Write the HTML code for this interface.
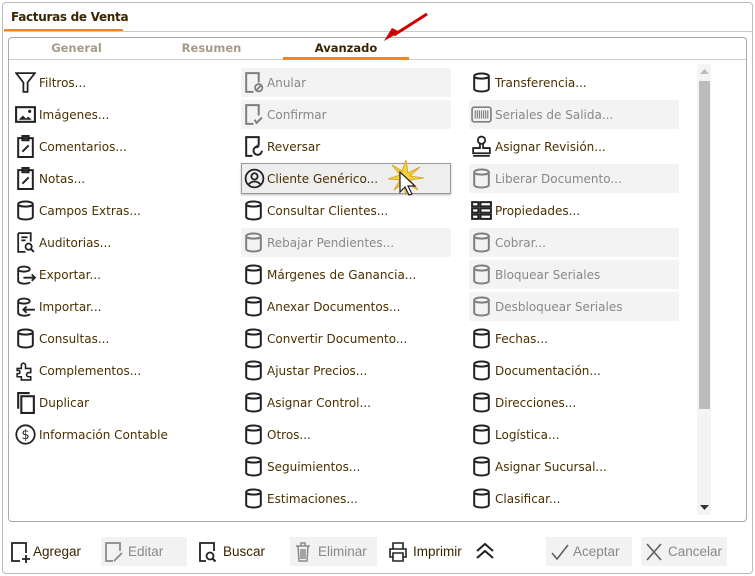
<!DOCTYPE html>
<html><head><meta charset="utf-8"><style>
*{box-sizing:border-box;margin:0;padding:0}
body{width:755px;height:576px;background:#fff;font-family:"DejaVu Sans","Liberation Sans",sans-serif;font-size:12px;color:#4a3000;position:relative;overflow:hidden}
.outer{position:absolute;left:2px;top:2px;width:751px;height:572px;border:1px solid #bbb;border-radius:4px;background:#fff}
.title{position:absolute;left:4px;top:3px;width:119px;height:29px;border-bottom:3px solid #f7841f;font-weight:bold;font-size:12px;color:#3a2500;padding:7px 0 0 7px;white-space:nowrap;letter-spacing:-0.3px}
.hline{position:absolute;left:4px;top:31px;width:748px;border-top:1px solid #ccc}
.panel{position:absolute;left:8px;top:37px;width:739px;height:485px;border:1px solid #aaa;border-radius:4px}
.tabs{position:absolute;left:9px;top:38px;width:737px;height:22px;border-bottom:1px solid #ccc}
.tab{position:absolute;top:3px;font-weight:bold;font-size:11.5px;color:#a89a88;text-align:center}
.tab.act{color:#3a2500;border-bottom:3px solid #f7841f;height:19px}
.it{position:absolute;height:29px;line-height:29px;white-space:nowrap}
.it svg{position:absolute;left:0;top:3px;width:21px;height:23px}
.it span{position:absolute;left:24px;top:1px}
.d{background:#f3f3f3;border-radius:2px;color:#888}
.d svg{opacity:.55}
.c2{left:241px;width:210px}.c2 svg{left:2px}.c2 span{left:26px}
.c3{left:469px;width:210px}.c3 svg{left:2px}.c3 span{left:26px}
.c1{left:15px;width:200px}
.hov{border:1px solid #999;background:#eee;box-shadow:0 1px 2px #bbb}
.sb{position:absolute;left:697px;top:64px;width:14px;height:451px;background:#f4f4f4}
.th{position:absolute;left:699px;top:81px;width:11px;height:328px;background:#bcbcbc}
.btn{position:absolute;top:537px;height:29px;line-height:29px;font-family:"Liberation Sans",sans-serif;font-size:13.5px;color:#3a2500}
.btn svg{position:absolute;top:4px;width:20px;height:22px}
.btn span{position:absolute}
.bd{background:#f2f2f2;color:#888}
</style></head><body>
<svg width="0" height="0" style="position:absolute"><defs>
<symbol id="db" viewBox="0 0 20 22"><path d="M3 5c0-3.5 14-3.5 14 0v12c0 3.5-14 3.5-14 0z M3 5c0 3 14 3 14 0" fill="none" stroke="#222" stroke-width="1.9"/></symbol>
</defs></svg>
<div class="outer"></div>
<div class="title">Facturas de Venta</div>
<div class="hline"></div>
<div class="panel"></div>
<div class="tabs">
<div class="tab" style="left:20px;width:95px">General</div>
<div class="tab" style="left:150px;width:105px">Resumen</div>
<div class="tab act" style="left:274px;width:126px">Avanzado</div>
</div>
<svg style="position:absolute;left:380px;top:10px" width="52" height="36"><line x1="47" y1="4" x2="14" y2="25" stroke="#c00" stroke-width="3"/><path d="M4 31 L20 22 L12 18z" fill="#c00"/></svg>

<!-- col1 -->
<div class="it c1" style="top:68px"><svg viewBox="0 0 20 22"><path d="M1 2h18l-7 9v9h-4v-9z" fill="none" stroke="#222" stroke-width="1.7"/></svg><span>Filtros...</span></div>
<div class="it c1" style="top:100px"><svg viewBox="0 0 20 22"><rect x="1" y="4" width="18" height="14" fill="none" stroke="#222" stroke-width="2"/><path d="M3.5 16l4-4 3 3 2-2 3.5 3z" fill="#222"/><circle cx="14" cy="8" r="1.5" fill="#222"/></svg><span>Imágenes...</span></div>
<div class="it c1" style="top:132px"><svg viewBox="0 0 20 22"><path d="M3 3h14v18H3z M7 1h6v4H7z M7 16l6-6" fill="none" stroke="#222" stroke-width="1.9"/></svg><span>Comentarios...</span></div>
<div class="it c1" style="top:164px"><svg viewBox="0 0 20 22"><path d="M3 3h14v18H3z M7 1h6v4H7z M7 16l6-6" fill="none" stroke="#222" stroke-width="1.9"/></svg><span>Notas...</span></div>
<div class="it c1" style="top:196px"><svg><use href="#db" width="21" height="23"/></svg><span>Campos Extras...</span></div>
<div class="it c1" style="top:228px"><svg viewBox="0 0 20 22"><path d="M3 2h12v8 M3 2v18h7 M6 6h6 M6 9h4" fill="none" stroke="#222" stroke-width="1.7"/><circle cx="13" cy="15" r="3" fill="none" stroke="#222" stroke-width="1.7"/><path d="M15 17l3 3" stroke="#222" stroke-width="1.9"/></svg><span>Auditorias...</span></div>
<div class="it c1" style="top:260px"><svg viewBox="0 0 20 22"><path d="M14 6c0-3.5-11-3.5-11 0v11c0 3.5 11 3.5 11 1 M3 6c0 3 11 3 11 0 M8 14h11 M16 11l3 3-3 3" fill="none" stroke="#222" stroke-width="1.8"/></svg><span>Exportar...</span></div>
<div class="it c1" style="top:292px"><svg viewBox="0 0 20 22"><path d="M14 6c0-3.5-11-3.5-11 0v11c0 3.5 11 3.5 11 1 M3 6c0 3 11 3 11 0 M8 14h11 M11 11l-3 3 3 3" fill="none" stroke="#222" stroke-width="1.8"/></svg><span>Importar...</span></div>
<div class="it c1" style="top:324px"><svg><use href="#db" width="21" height="23"/></svg><span>Consultas...</span></div>
<div class="it c1" style="top:356px"><svg viewBox="0 0 20 22"><path d="M2 9h4V6a2 2 0 014 0v3h5v4h-2a2 2 0 000 4h2v3H6v-3H2v-3h2a2 2 0 000-3H2z" fill="none" stroke="#222" stroke-width="1.5"/></svg><span>Complementos...</span></div>
<div class="it c1" style="top:388px"><svg viewBox="0 0 20 22"><path d="M3 17V2h11" fill="none" stroke="#222" stroke-width="2"/><rect x="6" y="5" width="12" height="16" fill="none" stroke="#222" stroke-width="2"/></svg><span>Duplicar</span></div>
<div class="it c1" style="top:420px"><svg viewBox="0 0 20 22"><circle cx="10" cy="11" r="8.8" fill="none" stroke="#222" stroke-width="1.7"/><text x="10" y="15.5" font-size="12.5" text-anchor="middle" font-family="DejaVu Sans" fill="#222">$</text></svg><span>Información Contable</span></div>

<!-- col2 -->
<div class="it c2 d" style="top:68px"><svg viewBox="0 0 20 22"><path d="M10 20H3V2h12v9" fill="none" stroke="#222" stroke-width="1.9"/><circle cx="15" cy="16" r="3.5" fill="none" stroke="#222" stroke-width="1.7"/><path d="M13 18l4-4" stroke="#222" stroke-width="1.7"/></svg><span>Anular</span></div>
<div class="it c2 d" style="top:100px"><svg viewBox="0 0 20 22"><path d="M10 20H3V2h12v10 M11 16l2 3 5-5" fill="none" stroke="#222" stroke-width="1.9"/></svg><span>Confirmar</span></div>
<div class="it c2" style="top:132px"><svg viewBox="0 0 20 22"><path d="M9 20H3V2h12v8 M18 15a4 4 0 11-4-4" fill="none" stroke="#222" stroke-width="1.9"/><path d="M13 9l3 2-3 2z" fill="#222"/></svg><span>Reversar</span></div>
<div class="it c2 hov" style="top:163px;height:31px"><svg viewBox="0 0 20 22"><circle cx="10" cy="11" r="8.5" fill="none" stroke="#222" stroke-width="1.7"/><circle cx="10" cy="9" r="3" fill="none" stroke="#222" stroke-width="1.7"/><path d="M4.5 16.5c3-3.5 8-3.5 11 0" fill="none" stroke="#222" stroke-width="1.7"/></svg><span style="left:25px">Cliente Genérico...</span></div>
<svg style="position:absolute;left:386px;top:158px" width="40" height="42"><path d="M20 2l2 13 12-6-10 9 14 2-14 2 8 10-11-7-1 12-3-12-9 7 6-10-12-1 12-4-8-10 10 6z" fill="#f6d23a" stroke="#d4a010" stroke-width=".8"/><path d="M14 14v20l5-5 4 8 3-1-4-8h7z" fill="#fff" stroke="#222" stroke-width="1.2"/></svg>
<div class="it c2" style="top:196px"><svg><use href="#db" width="21" height="23"/></svg><span>Consultar Clientes...</span></div>
<div class="it c2 d" style="top:228px"><svg><use href="#db" width="21" height="23"/></svg><span>Rebajar Pendientes...</span></div>
<div class="it c2" style="top:260px"><svg><use href="#db" width="21" height="23"/></svg><span>Márgenes de Ganancia...</span></div>
<div class="it c2" style="top:292px"><svg><use href="#db" width="21" height="23"/></svg><span>Anexar Documentos...</span></div>
<div class="it c2" style="top:324px"><svg><use href="#db" width="21" height="23"/></svg><span>Convertir Documento...</span></div>
<div class="it c2" style="top:356px"><svg><use href="#db" width="21" height="23"/></svg><span>Ajustar Precios...</span></div>
<div class="it c2" style="top:388px"><svg><use href="#db" width="21" height="23"/></svg><span>Asignar Control...</span></div>
<div class="it c2" style="top:420px"><svg><use href="#db" width="21" height="23"/></svg><span>Otros...</span></div>
<div class="it c2" style="top:452px"><svg><use href="#db" width="21" height="23"/></svg><span>Seguimientos...</span></div>
<div class="it c2" style="top:484px"><svg><use href="#db" width="21" height="23"/></svg><span>Estimaciones...</span></div>

<!-- col3 -->
<div class="it c3" style="top:68px"><svg><use href="#db" width="21" height="23"/></svg><span>Transferencia...</span></div>
<div class="it c3 d" style="top:100px"><svg viewBox="0 0 20 22"><rect x="1" y="4" width="18" height="14" rx="2" fill="none" stroke="#222" stroke-width="1.6"/><path d="M4 7v8M6 7v8M8 7v8M10 7v8M12 7v8M14 7v8M16 7v8" stroke="#222" stroke-width="1.1"/></svg><span>Seriales de Salida...</span></div>
<div class="it c3" style="top:132px"><svg viewBox="0 0 20 22"><circle cx="10" cy="5" r="3.5" fill="none" stroke="#222" stroke-width="1.7"/><path d="M8.5 8.5v4H2v5h16v-5h-6.5v-4 M2 20h16" fill="none" stroke="#222" stroke-width="1.7"/></svg><span>Asignar Revisión...</span></div>
<div class="it c3 d" style="top:164px"><svg><use href="#db" width="21" height="23"/></svg><span>Liberar Documento...</span></div>
<div class="it c3" style="top:196px"><svg viewBox="0 0 20 22"><path d="M1 3h6v4H1zM9 3h10v4H9zM1 9h6v4H1zM9 9h10v4H9zM1 15h6v4H1zM9 15h10v4H9z" fill="none" stroke="#222" stroke-width="1.9"/></svg><span>Propiedades...</span></div>
<div class="it c3 d" style="top:228px"><svg><use href="#db" width="21" height="23"/></svg><span>Cobrar...</span></div>
<div class="it c3 d" style="top:260px"><svg><use href="#db" width="21" height="23"/></svg><span>Bloquear Seriales</span></div>
<div class="it c3 d" style="top:292px"><svg><use href="#db" width="21" height="23"/></svg><span>Desbloquear Seriales</span></div>
<div class="it c3" style="top:324px"><svg><use href="#db" width="21" height="23"/></svg><span>Fechas...</span></div>
<div class="it c3" style="top:356px"><svg><use href="#db" width="21" height="23"/></svg><span>Documentación...</span></div>
<div class="it c3" style="top:388px"><svg><use href="#db" width="21" height="23"/></svg><span>Direcciones...</span></div>
<div class="it c3" style="top:420px"><svg><use href="#db" width="21" height="23"/></svg><span>Logística...</span></div>
<div class="it c3" style="top:452px"><svg><use href="#db" width="21" height="23"/></svg><span>Asignar Sucursal...</span></div>
<div class="it c3" style="top:484px"><svg><use href="#db" width="21" height="23"/></svg><span>Clasificar...</span></div>

<div class="sb"></div><div class="th"></div>
<svg style="position:absolute;left:700px;top:68px" width="9" height="6"><path d="M0 6L4.5 1 9 6z" fill="#bbb"/></svg>
<svg style="position:absolute;left:700px;top:505px" width="9" height="6"><path d="M0 0L4.5 5 9 0z" fill="#333"/></svg>

<!-- buttons -->
<div class="btn" style="left:8px;width:80px"><svg viewBox="0 0 20 22" style="left:2px"><path d="M10 20H2V2h14v10 M12 18h8 M16 14v8" fill="none" stroke="#222" stroke-width="1.8"/></svg><span style="left:25px">Agregar</span></div>
<div class="btn bd" style="left:101px;width:86px"><svg viewBox="0 0 20 22" style="left:3px;opacity:.5"><path d="M9 20H2V2h14v8 M10 20l8-8" fill="none" stroke="#222" stroke-width="1.8"/></svg><span style="left:27px">Editar</span></div>
<div class="btn" style="left:198px;width:80px"><svg viewBox="0 0 20 22" style="left:0"><path d="M8 20H2V2h14v8" fill="none" stroke="#222" stroke-width="1.8"/><circle cx="12" cy="15" r="3.5" fill="none" stroke="#222" stroke-width="1.8"/><path d="M14.5 17.5l3 3" stroke="#222" stroke-width="2"/></svg><span style="left:25px">Buscar</span></div>
<div class="btn bd" style="left:290px;width:87px"><svg viewBox="0 0 20 22" style="left:3px;opacity:.5"><path d="M3 5h14 M8 5V2h4v3 M5 5l1 15h8l1-15 M8 8v10M10 8v10M12 8v10" fill="none" stroke="#222" stroke-width="1.5"/></svg><span style="left:28px">Eliminar</span></div>
<div class="btn" style="left:388px;width:80px"><svg viewBox="0 0 20 22" style="left:0"><path d="M5 8V2h10v6 M5 16H2V8h16v8h-3 M5 12h10v8H5z" fill="none" stroke="#222" stroke-width="1.6"/></svg><span style="left:25px">Imprimir</span></div>
<svg style="position:absolute;left:475px;top:542px" width="20" height="18"><path d="M2 9l8-7 8 7M2 16l8-7 8 7" fill="none" stroke="#222" stroke-width="2"/></svg>
<div class="btn bd" style="left:546px;width:86px"><svg viewBox="0 0 20 22" style="left:4px;opacity:.7"><path d="M2 12l5 6L18 4" fill="none" stroke="#222" stroke-width="1.6"/></svg><span style="left:27px">Aceptar</span></div>
<div class="btn bd" style="left:641px;width:86px"><svg viewBox="0 0 20 22" style="left:3px;opacity:.7"><path d="M3 3l14 16M17 3L3 19" fill="none" stroke="#222" stroke-width="1.6"/></svg><span style="left:27px">Cancelar</span></div>
</body></html>
